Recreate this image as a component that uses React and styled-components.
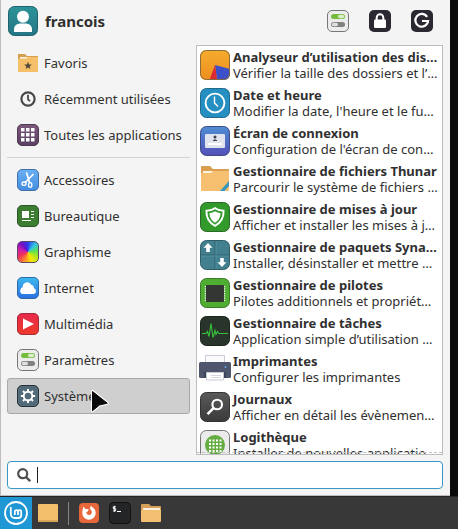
import React from "react";
import styled, { createGlobalStyle } from "styled-components";

const GlobalStyle = createGlobalStyle`
  * {
    box-sizing: border-box;
  }

  body {
    margin: 0;
    background: #0b0b0b;
    font-family: "Noto Sans", "Open Sans", sans-serif;
    font-size: 13px;
    color: #303030;
  }

  button,
  input {
    font: inherit;
    color: inherit;
  }
`;

const SettingsIcon = ({ size = 22 }) => (
  <svg width={size} height={size} viewBox="0 0 22 22" aria-hidden="true">
    <rect x="0.5" y="0.5" width="21" height="21" rx="4.5" fill="#ececec" stroke="#777" />
    <rect x="4" y="4" width="14" height="5" rx="2.5" fill="#77bd3d" />
    <rect x="11" y="4.8" width="6.2" height="3.4" rx="1.7" fill="#d9efc9" />
    <rect x="4" y="12" width="14" height="5" rx="2.5" fill="#808080" />
    <rect x="4.8" y="12.8" width="6.2" height="3.4" rx="1.7" fill="#dedede" />
  </svg>
);

const LockIcon = () => (
  <svg width="22" height="22" viewBox="0 0 22 22" aria-hidden="true">
    <rect width="22" height="22" rx="5" fill="#2c2831" />
    <path d="M7.7 10V7.6a3.3 3.3 0 0 1 6.6 0V10" fill="none" stroke="#fff" strokeWidth="2" />
    <rect x="5" y="9.5" width="12" height="8.5" rx="1" fill="#fff" />
  </svg>
);

const LogoutIcon = () => (
  <svg width="22" height="22" viewBox="0 0 22 22" aria-hidden="true">
    <rect width="22" height="22" rx="5" fill="#2c2831" />
    <path
      d="M16.1 6.8a6.4 6.4 0 1 0 1 4.200H11"
      fill="none"
      stroke="#fff"
      strokeWidth="2.2"
    />
  </svg>
);

const AvatarIcon = () => (
  <svg width="30" height="30" viewBox="0 0 30 30" aria-hidden="true">
    <defs>
      <linearGradient id="avatar" x1="0" y1="0" x2="0" y2="1">
        <stop offset="0" stopColor="#2d9399" />
        <stop offset="1" stopColor="#247684" />
      </linearGradient>
    </defs>
    <rect x="0.5" y="0.5" width="29" height="29" rx="6" fill="url(#avatar)" stroke="#1d626c" />
    <circle cx="15" cy="10.7" r="6" fill="#fff" />
    <path d="M6 26v-2.5c0-4 3-6 7-6h4c4 0 7 2 7 6V26z" fill="#fff" />
  </svg>
);

const FavoritesIcon = () => (
  <svg width="22" height="22" viewBox="0 0 22 22" aria-hidden="true">
    <path d="M1 2h7l2 2h11v5H1z" fill="#d79e4e" />
    <path d="M3 5h17v3H3z" fill="#faf3e6" />
    <path d="M1 6.5h8l2-1.5h10v15H1z" fill="#f6c06a" />
    <path
      d="m11 9.800 1.100 2.600 2.700.2-2.100 1.800.7 2.700-2.400-1.500-2.400 1.500.7-2.700-2.100-1.800 2.700-.2z"
      fill="#554a3a"
    />
  </svg>
);

const RecentIcon = () => (
  <svg width="22" height="22" viewBox="0 0 22 22" aria-hidden="true">
    <circle cx="11" cy="11" r="6.6" fill="none" stroke="#484848" strokeWidth="2.200" />
    <path d="M11 6.800v4.500l2 1.900" fill="none" stroke="#484848" strokeWidth="1.8" />
  </svg>
);

const AllAppsIcon = () => (
  <svg width="22" height="22" viewBox="0 0 22 22" aria-hidden="true">
    <defs>
      <linearGradient id="allApps" x1="0" y1="0" x2="0" y2="1">
        <stop offset="0" stopColor="#7c597c" />
        <stop offset="1" stopColor="#5b4061" />
      </linearGradient>
    </defs>
    <rect x="0.5" y="0.5" width="21" height="21" rx="4.5" fill="url(#allApps)" stroke="#503a52" />
    {[4, 9, 14].map((y) =>
      [4, 9, 14].map((x) => (
        <rect key={x + "-" + y} x={x} y={y} width="3.500" height="3.500" fill="#fff" />
      ))
    )}
  </svg>
);

const AccessoriesIcon = () => (
  <svg width="22" height="22" viewBox="0 0 22 22" aria-hidden="true">
    <defs>
      <linearGradient id="accessories" x1="0" y1="0" x2="0" y2="1">
        <stop offset="0" stopColor="#6bb0f5" />
        <stop offset="1" stopColor="#438ce0" />
      </linearGradient>
    </defs>
    <rect x="0.5" y="0.5" width="21" height="21" rx="4.5" fill="url(#accessories)" stroke="#3f70a8" />
    <g fill="none" stroke="#fff" strokeWidth="1.3">
      <path d="m9.500 3.500 3 10M16.500 5l-8.200 8.500" strokeWidth="1.7" />
      <ellipse cx="7" cy="14.7" rx="2" ry="1.7" />
      <ellipse cx="13.2" cy="15.9" rx="1.7" ry="2.3" />
    </g>
  </svg>
);

const OfficeIcon = () => (
  <svg width="22" height="22" viewBox="0 0 22 22" aria-hidden="true">
    <rect x="0.5" y="0.5" width="21" height="21" rx="4.5" fill="#3c7d32" stroke="#2b5726" />
    <path d="M5 6h7v7H5zM14 6h3v1h-3zM14 9h3v1h-3zM14 12h3v1h-3zM5 15h9v1H5z" fill="#fff" />
  </svg>
);

const ColorWheel = styled.span`
  width: 22px;
  height: 22px;
  flex-shrink: 0;
  border: 1px solid #5a4a66;
  border-radius: 5px;
  background: conic-gradient(
    #2a3df0,
    #35c8e0 45deg,
    #5fe04a 85deg,
    #b5e61d 120deg,
    #f7e600 160deg,
    #ff8a2a 200deg,
    #f0305a 245deg,
    #d020a8 285deg,
    #6a10c8 325deg,
    #2a3df0
  );
`;

const InternetIcon = () => (
  <svg width="22" height="22" viewBox="0 0 22 22" aria-hidden="true">
    <defs>
      <linearGradient id="internet" x1="0" y1="0" x2="0" y2="1">
        <stop offset="0" stopColor="#3cb9ee" />
        <stop offset="1" stopColor="#2d6fe0" />
      </linearGradient>
    </defs>
    <rect x="0.5" y="0.5" width="21" height="21" rx="4.5" fill="url(#internet)" stroke="#2c6ba8" />
    <path
      d="M6 17a3 3 0 0 1-2.5-4.500c.2-1.200 1-2 2.200-2.300A4.500 4.500 0 0 1 10 5.300c2 0 3.500 1 4.300 2.700 1.700.2 2.700 1.500 2.700 3.200 1.300.6 2 1.500 2 2.800 0 1.800-1.200 3-3 3z"
      fill="#fff"
    />
  </svg>
);

const MediaIcon = () => (
  <svg width="22" height="22" viewBox="0 0 22 22" aria-hidden="true">
    <defs>
      <linearGradient id="media" x1="0" y1="0" x2="0" y2="1">
        <stop offset="0" stopColor="#e8294b" />
        <stop offset="1" stopColor="#ee3a2a" />
      </linearGradient>
    </defs>
    <rect x="0.5" y="0.5" width="21" height="21" rx="4.5" fill="url(#media)" stroke="#a02a38" />
    <path d="M6 5.500 17 11 6 16.500z" fill="#fff" />
  </svg>
);

const SystemIcon = () => (
  <svg width="22" height="22" viewBox="0 0 22 22" aria-hidden="true">
    <rect x="0.5" y="0.5" width="21" height="21" rx="4.5" fill="#516b79" stroke="#26333b" />
    <circle cx="11" cy="11" r="4.3" fill="none" stroke="#fff" strokeWidth="1.9" />
    {[0, 45, 90, 135, 180, 225, 270, 315].map((a) => (
      <path key={a} d="M10 3.900h2v3h-2z" fill="#fff" transform={`rotate(${a} 11 11)`} />
    ))}
  </svg>
);

const DiskUsageIcon = () => (
  <svg width="30" height="30" viewBox="0 0 30 30" aria-hidden="true">
    <defs>
      <linearGradient id="disk" x1="0" y1="0" x2="0" y2="1">
        <stop offset="0" stopColor="#f4ac2e" />
        <stop offset="1" stopColor="#ee8e1e" />
      </linearGradient>
      <clipPath id="diskClip">
        <rect width="30" height="30" rx="6" />
      </clipPath>
    </defs>
    <g clipPath="url(#diskClip)">
      <rect width="30" height="30" fill="url(#disk)" />
      <path d="m15 15 15 4v11H17z" fill="#3d50c8" />
      <path d="m15 15 2 15H9.500z" fill="#db2a30" />
    </g>
    <rect x="0.5" y="0.5" width="29" height="29" rx="6" fill="none" stroke="#8a6a3c" />
  </svg>
);

const ClockIcon = () => (
  <svg width="30" height="30" viewBox="0 0 30 30" aria-hidden="true">
    <rect x="0.5" y="0.5" width="29" height="29" rx="6" fill="#248fc0" stroke="#216a8c" />
    <circle cx="15" cy="15" r="9.4" fill="none" stroke="#fff" strokeWidth="1.9" />
    <path d="M14.500 8.500V15l3.500 3.500" fill="none" stroke="#fff" strokeWidth="1.4" />
  </svg>
);

const LoginScreenIcon = () => (
  <svg width="30" height="30" viewBox="0 0 30 30" aria-hidden="true">
    <defs>
      <linearGradient id="login" x1="0" y1="0" x2="0" y2="1">
        <stop offset="0" stopColor="#4e8dd4" />
        <stop offset="1" stopColor="#5350b8" />
      </linearGradient>
    </defs>
    <rect x="0.5" y="0.5" width="29" height="29" rx="6" fill="url(#login)" stroke="#3c4c80" />
    <rect x="5" y="8" width="20" height="14" rx="1" fill="#dfe4ef" />
    <circle cx="15" cy="11" r="1.5" fill="#3d4251" />
    <path d="M12.800 15c0-2 4.400-2 4.400 0z" fill="#3d4251" />
    <path d="M8 17h14v2H8z" fill="#fff" />
  </svg>
);

const ThunarIcon = () => (
  <svg width="30" height="30" viewBox="0 0 30 30" aria-hidden="true">
    <path d="M1 3q0-1 1-1h8l3 3h15q1 0 1 1v6H1z" fill="#d99e50" />
    <path d="M3 7h25v4H3z" fill="#fbf1df" />
    <path d="M1 9h10l2-2h16v19q0 1-1 1H2q-1 0-1-1z" fill="#f6c070" />
    <path d="m20 27 9-10v5l-4.500 5z" fill="#3796ba" />
  </svg>
);

const ShieldIcon = () => (
  <svg width="30" height="30" viewBox="0 0 30 30" aria-hidden="true">
    <rect x="0.5" y="0.5" width="29" height="29" rx="6" fill="#319a2b" stroke="#2b6728" />
    <path d="M15 5q4.500 3.300 9.500 2.800Q25.500 19.500 15 25 4.500 19.500 5.500 7.800 10.500 8.300 15 5z" fill="#fff" />
    <path d="M15 7.300q3.500 2.200 7.600 2.300Q22.600 18.500 15 22.800 7.400 18.500 7.400 9.600 11.500 9.500 15 7.300z" fill="#319a2b" />
    <path d="M15 9.300q2.500 1.500 5.600 1.900Q20.300 17.500 15 20.700 9.700 17.500 9.400 11.200 12.500 10.800 15 9.300z" fill="#fff" />
  </svg>
);

const PackagesIcon = () => (
  <svg width="30" height="30" viewBox="0 0 30 30" aria-hidden="true">
    <rect x="0.5" y="0.5" width="29" height="29" rx="6" fill="#42808f" stroke="#315d69" />
    <path d="M15 1v28M1 15h28" stroke="#2f606d" />
    <path d="M16 1v28M1 16h28" stroke="#68a0ad" strokeWidth="0.5" />
    <path
      d="m8 3 4.500 4.800h-2.700V12H6.200V7.800H3.500zM20.200 18h3.600v4.200h2.700L22 27l-4.500-4.800h2.700z"
      fill="#fff"
    />
  </svg>
);

const DriversIcon = () => (
  <svg width="30" height="30" viewBox="0 0 30 30" aria-hidden="true">
    <rect x="0.5" y="0.5" width="29" height="29" rx="6" fill="#4fae32" stroke="#3c7a2b" />
    <path d="M5.500 8v16M24.500 8v16" stroke="#eaf4e6" strokeWidth="1.5" strokeDasharray="1.3 1" />
    <rect x="6" y="7" width="18" height="17" rx="1" fill="#343633" />
  </svg>
);

const TasksIcon = () => (
  <svg width="30" height="30" viewBox="0 0 30 30" aria-hidden="true">
    <rect x="0.5" y="0.5" width="29" height="29" rx="6" fill="#29342a" stroke="#1c241d" />
    <path
      d="M2 17.500h4l1.500-2 1.500 5 2-13 2 14 2-7 1 4 1.500-3 1.500 2H28"
      fill="none"
      stroke="#37c13b"
      strokeWidth="1.1"
    />
  </svg>
);

const PrinterIcon = () => (
  <svg width="32" height="30" viewBox="0 0 32 30" aria-hidden="true">
    <path d="M6.500 1.500h19V9h-19z" fill="#fbfbfd" stroke="#c9cbd6" />
    <rect y="8" width="32" height="16" rx="1.5" fill="#4e556d" />
    <path d="M5 18h22v6H5z" fill="#3c425a" />
    <circle cx="26.5" cy="13" r="1" fill="#61a5ea" />
    <path d="M7.500 18.500h17V26h-17z" fill="#fff" stroke="#c9cbd6" />
    <path d="M12 21.500h10M12 23.500h10" stroke="#d5d6dc" />
  </svg>
);

const LogsIcon = () => (
  <svg width="30" height="30" viewBox="0 0 30 30" aria-hidden="true">
    <defs>
      <linearGradient id="logs" x1="0" y1="0" x2="0" y2="1">
        <stop offset="0" stopColor="#5a5a5a" />
        <stop offset="1" stopColor="#3a3a3a" />
      </linearGradient>
    </defs>
    <rect x="0.5" y="0.5" width="29" height="29" rx="6" fill="url(#logs)" stroke="#333" />
    <circle cx="17.2" cy="12.5" r="4.8" fill="none" stroke="#fff" strokeWidth="2.1" />
    <path d="m13.500 16.200-6 6" stroke="#fff" strokeWidth="2.4" />
  </svg>
);

const SoftwareIcon = () => (
  <svg width="30" height="30" viewBox="0 0 30 30" aria-hidden="true">
    <rect x="0.5" y="0.5" width="29" height="29" rx="6" fill="#ebebeb" stroke="#747474" />
    <circle cx="15" cy="15" r="10" fill="#66ad41" />
    {[9.5, 13, 16.5, 20].map((y) =>
      [9, 12.5, 16, 19.5].map((x) => (
        <rect key={x + "-" + y} x={x} y={y} width="2" height="2" fill="#fff" />
      ))
    )}
  </svg>
);

const SearchIcon = () => (
  <svg width="14" height="14" viewBox="0 0 14 14" aria-hidden="true">
    <circle cx="5.7" cy="5.7" r="4.5" fill="none" stroke="#505050" strokeWidth="2.2" />
    <path d="m9 9 4.200 4.200" stroke="#505050" strokeWidth="2.4" />
  </svg>
);

const MintIcon = () => (
  <svg width="24" height="24" viewBox="0 0 24 24" aria-hidden="true">
    <circle cx="12" cy="12" r="11" fill="none" stroke="#fff" strokeWidth="1.8" />
    <path
      d="M6.800 6v7a4 4 0 0 0 4 4h3.400a3 3 0 0 0 3-3v-3.200a1.600 1.600 0 0 0-3.200 0V14M14 10.800a1.600 1.600 0 0 0-3.200 0V14"
      fill="none"
      stroke="#fff"
      strokeWidth="1.8"
    />
  </svg>
);

const DesktopIcon = () => (
  <svg width="20" height="20" viewBox="0 0 20 20" aria-hidden="true">
    <rect y="1" width="20" height="18" rx="1" fill="#f3bf6d" />
    <path d="M0 17h20v2H0z" fill="#d9a556" />
  </svg>
);

const FirefoxIcon = () => (
  <svg width="20" height="20" viewBox="0 0 20 20" aria-hidden="true">
    <rect width="20" height="20" rx="4" fill="#e8673a" />
    <path
      d="M4.300 3.500 6.500 6l3.300.3-.9 2-1.600 1c.2 1.900 1.300 2.700 2.700 2.700 2.300 0 3.200-1.900 2.600-3.900-.4-1.200-1.700-1.600-1.600-3.200.1-1 .6-1.700 1.200-2.200.3 1.200 1.400 1.500 2.300 2.400 1.500 1.400 2.200 3.200 2.200 5a6.700 6.700 0 0 1-13.400 0c0-2.500.5-4.200 1-6.600z"
      fill="#fff"
    />
  </svg>
);

const TerminalIcon = () => (
  <svg width="22" height="22" viewBox="0 0 22 22" aria-hidden="true">
    <rect x="0.5" y="0.5" width="21" height="21" rx="4" fill="#242527" stroke="#111" />
    <path d="M6.800 4.800H4.300v2h2.400v2.100H4M5.400 3.800v6M8 9.500h4" fill="none" stroke="#fff" />
  </svg>
);

const FolderIcon = () => (
  <svg width="20" height="20" viewBox="0 0 20 20" aria-hidden="true">
    <path d="M0 2q0-1 1-1h7l2 2h9q1 0 1 1v5H0z" fill="#d5a058" />
    <path d="M2 5h17v3H2z" fill="#f8efdf" />
    <path d="M0 7h20v11q0 1-1 1H1q-1 0-1-1z" fill="#f3c072" />
  </svg>
);

const PointerIcon = () => (
  <svg width="18" height="24" viewBox="0 0 18 24" aria-hidden="true">
    <path
      d="M1.500 1.500 16.300 13.200 8.500 15 1.500 20.800z"
      fill="#0a0a0a"
      stroke="#fff"
      strokeWidth="3"
      strokeLinejoin="round"
    />
    <path
      d="M1.500 1.500 16.300 13.200 8.500 15 1.500 20.800z"
      fill="#0a0a0a"
      stroke="#0a0a0a"
      strokeLinejoin="round"
    />
  </svg>
);

const shortcuts = [
  { name: "Favoris", icon: <FavoritesIcon /> },
  { name: "Récemment utilisées", icon: <RecentIcon /> },
  { name: "Toutes les applications", icon: <AllAppsIcon /> },
];

const categories = [
  { name: "Accessoires", icon: <AccessoriesIcon /> },
  { name: "Bureautique", icon: <OfficeIcon /> },
  { name: "Graphisme", icon: <ColorWheel /> },
  { name: "Internet", icon: <InternetIcon /> },
  { name: "Multimédia", icon: <MediaIcon /> },
  { name: "Paramètres", icon: <SettingsIcon /> },
  { name: "Système", icon: <SystemIcon />, selected: true },
];

const apps = [
  { name: "Analyseur d’utilisation des dis…", text: "Vérifier la taille des dossiers et l’…", icon: <DiskUsageIcon /> },
  { name: "Date et heure", text: "Modifier la date, l'heure et le fu…", icon: <ClockIcon /> },
  { name: "Écran de connexion", text: "Configuration de l'écran de con…", icon: <LoginScreenIcon /> },
  { name: "Gestionnaire de fichiers Thunar", text: "Parcourir le système de fichiers …", icon: <ThunarIcon /> },
  { name: "Gestionnaire de mises à jour", text: "Afficher et installer les mises à j…", icon: <ShieldIcon /> },
  { name: "Gestionnaire de paquets Syna…", text: "Installer, désinstaller et mettre …", icon: <PackagesIcon /> },
  { name: "Gestionnaire de pilotes", text: "Pilotes additionnels et propriét…", icon: <DriversIcon /> },
  { name: "Gestionnaire de tâches", text: "Application simple d’utilisation …", icon: <TasksIcon /> },
  { name: "Imprimantes", text: "Configurer les imprimantes", icon: <PrinterIcon /> },
  { name: "Journaux", text: "Afficher en détail les évènemen…", icon: <LogsIcon /> },
  { name: "Logithèque", text: "Installer de nouvelles applicatio…", icon: <SoftwareIcon /> },
];

function App() {
  return (
    <Desktop>
      <GlobalStyle />
      <Menu>
        <Header>
          <AvatarIcon />
          <UserName>francois</UserName>
          <Session>
            <IconButton aria-label="Paramètres">
              <SettingsIcon />
            </IconButton>
            <IconButton aria-label="Verrouiller">
              <LockIcon />
            </IconButton>
            <IconButton aria-label="Déconnexion">
              <LogoutIcon />
            </IconButton>
          </Session>
        </Header>
        <Content>
          <Sidebar>
            {shortcuts.map((item) => (
              <Category key={item.name}>
                {item.icon}
                {item.name}
              </Category>
            ))}
            <Divider />
            {categories.map((item) => (
              <Category key={item.name} $selected={item.selected}>
                {item.icon}
                {item.name}
                {item.selected && (
                  <Pointer>
                    <PointerIcon />
                  </Pointer>
                )}
              </Category>
            ))}
          </Sidebar>
          <AppList>
            {apps.map((app) => (
              <AppRow key={app.name}>
                <AppIcon>{app.icon}</AppIcon>
                <AppText>
                  <AppName>{app.name}</AppName>
                  <AppDescription>{app.text}</AppDescription>
                </AppText>
              </AppRow>
            ))}
          </AppList>
        </Content>
        <Search>
          <SearchIcon />
          <Caret />
          <SearchInput type="text" aria-label="Rechercher" />
        </Search>
      </Menu>
      <Taskbar>
        <StartButton aria-label="Menu">
          <MintIcon />
        </StartButton>
        <Launchers>
          <IconButton aria-label="Bureau">
            <DesktopIcon />
          </IconButton>
          <Separator />
          <IconButton aria-label="Firefox">
            <FirefoxIcon />
          </IconButton>
          <IconButton aria-label="Terminal">
            <TerminalIcon />
          </IconButton>
          <IconButton aria-label="Fichiers">
            <FolderIcon />
          </IconButton>
        </Launchers>
      </Taskbar>
    </Desktop>
  );
}

export default App;

const Desktop = styled.div`
  height: 100vh;
  display: flex;
  flex-direction: column;
  background: #0b0b0b;
`;

const Menu = styled.main`
  flex: 1;
  min-height: 0;
  margin-right: 8px;
  padding: 0 7px 6px 6px;
  display: flex;
  flex-direction: column;
  background: #f4f4f4;
  border-left: 1px solid #bcbcbc;
  border-bottom: 1px solid #bcbcbc;
`;

const Header = styled.header`
  height: 45px;
  flex-shrink: 0;
  padding: 0 10px 4px 1px;
  display: flex;
  align-items: center;
  gap: 7px;
`;

const UserName = styled.h1`
  margin: 0;
  font-size: 15px;
  line-height: 20px;
  font-weight: 700;
`;

const Session = styled.div`
  margin-left: auto;
  display: flex;
  gap: 20px;
`;

const IconButton = styled.button`
  display: flex;
  padding: 0;
  border: 0;
  background: none;
`;

const Content = styled.div`
  flex: 1;
  min-height: 0;
  display: grid;
  grid-template-columns: minmax(0, 183fr) minmax(0, 247fr);
  grid-template-rows: minmax(0, 1fr);
  gap: 6px;
`;

const Sidebar = styled.nav`
  display: flex;
  flex-direction: column;
`;

const Category = styled.button`
  position: relative;
  height: 36px;
  flex-shrink: 0;
  padding: 0 9px;
  display: flex;
  align-items: center;
  gap: 5px;
  white-space: nowrap;
  border: 1px solid ${(props) => (props.$selected ? "#a9a9a9" : "transparent")};
  border-radius: 3px;
  background: ${(props) => (props.$selected ? "#cfcfcf" : "transparent")};

  svg {
    flex-shrink: 0;
  }
`;

const Pointer = styled.span`
  position: absolute;
  left: 83px;
  top: 11px;
`;

const Divider = styled.hr`
  width: 100%;
  margin: 4px 0;
  border: 0;
  border-top: 1px solid #d4d4d4;
`;

const AppList = styled.ul`
  position: relative;
  margin: 0;
  padding: 0 3px;
  list-style: none;
  overflow: hidden;
  background: #fff;
  border: 1px solid #bdbdbd;

  &:after {
    position: absolute;
    left: 0;
    right: 0;
    bottom: 1px;
    content: "";
    border-bottom: 1px dashed #c4c4c4;
  }
`;

const AppRow = styled.li`
  height: 38px;
  display: flex;
  align-items: center;
  gap: 3px;
`;

const AppIcon = styled.span`
  width: 30px;
  flex-shrink: 0;
  display: flex;
  justify-content: center;

  svg {
    flex-shrink: 0;
  }
`;

const AppText = styled.div`
  min-width: 0;
  line-height: 16px;
  white-space: nowrap;
`;

const AppName = styled.div`
  font-weight: 700;
`;

const AppDescription = styled.div``;

const Search = styled.label`
  height: 28px;
  flex-shrink: 0;
  margin-top: 6px;
  padding: 0 9px;
  display: flex;
  align-items: center;
  gap: 6px;
  background: #fff;
  border: 1px solid #3a97c4;
  border-radius: 4px;
`;

const Caret = styled.span`
  width: 1px;
  height: 16px;
  background: #202020;
`;

const SearchInput = styled.input`
  flex: 1;
  min-width: 0;
  padding: 0;
  border: 0;
  outline: 0;
  background: none;
`;

const Taskbar = styled.footer`
  height: 33px;
  flex-shrink: 0;
  display: flex;
  background: #383838;
  border-top: 1px solid #242424;
`;

const StartButton = styled(IconButton)`
  width: 32px;
  align-items: center;
  justify-content: center;
  background: #1f97d4;
`;

const Launchers = styled.div`
  padding-left: 6px;
  display: flex;
  align-items: center;
  gap: 10px;
`;

const Separator = styled.span`
  width: 1px;
  height: 23px;
  background: #858585;
`;
